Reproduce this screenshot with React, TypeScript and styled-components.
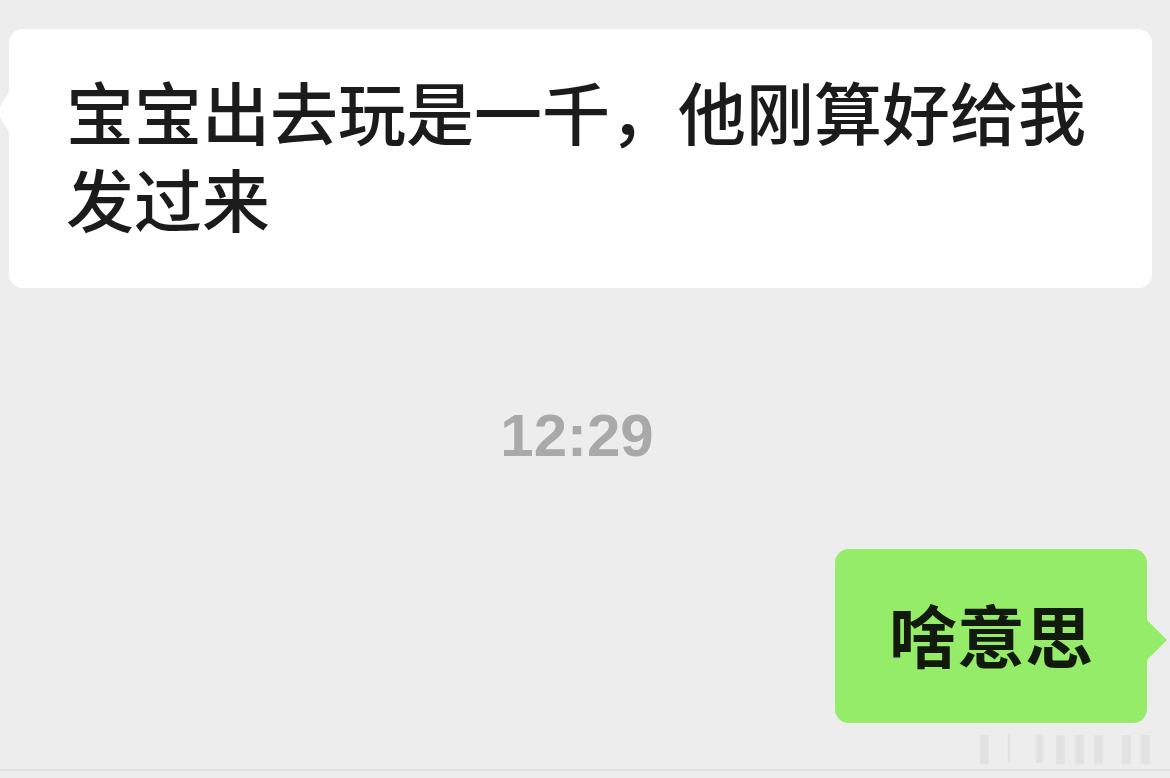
import React from 'react';
import styled, { createGlobalStyle } from 'styled-components';

const GlobalStyle = createGlobalStyle`
  html, body {
    margin: 0;
    padding: 0;
    background: #ededed;
  }
  body {
    font-family: "Noto Sans CJK SC", "Noto Sans", sans-serif;
  }
`;

const Screen = styled.div`
  width: 1170px;
  height: 778px;
  box-sizing: border-box;
  background: #ededed;
  display: flex;
  flex-direction: column;
  padding-top: 29px;
  overflow: hidden;
`;

const Row = styled.div<{ $self?: boolean }>`
  display: flex;
  justify-content: ${(p) => (p.$self ? 'flex-end' : 'flex-start')};
  padding: ${(p) => (p.$self ? '0 23px 0 0' : '0 0 0 9px')};
`;

const Bubble = styled.div<{ $self?: boolean }>`
  position: relative;
  box-sizing: border-box;
  background: ${(p) => (p.$self ? '#95ec69' : '#ffffff')};
  color: ${(p) => (p.$self ? '#111a0c' : '#1b1b1b')};
  border-radius: 14px;
  font-size: 68px;
  line-height: 87px;
  font-weight: ${(p) => (p.$self ? 700 : 500)};
  width: ${(p) => (p.$self ? '312px' : '1143px')};
  height: ${(p) => (p.$self ? '174px' : '259px')};
  padding: ${(p) => (p.$self ? '41px 0 0 54px' : '38px 40px 0 57px')};

  &::before {
    content: '';
    position: absolute;
    top: ${(p) => (p.$self ? '71px' : '63px')};
    ${(p) => (p.$self ? 'right: -20px;' : 'left: -12px;')}
    border-style: solid;
    border-width: 20px;
    border-color: transparent;
    ${(p) =>
      p.$self
        ? 'border-left: 20px solid #95ec69; border-right-width: 0;'
        : 'border-right: 12px solid #ffffff; border-left-width: 0;'}
  }
`;

const Time = styled.div`
  margin: 113px 0 78px;
  padding-right: 16px;
  text-align: center;
  font-family: "Liberation Sans", Arial, sans-serif;
  font-weight: 700;
  font-size: 60px;
  line-height: 70px;
  color: #a9a9a9;
`;

const Footer = styled.div`
  margin-top: 12px;
  display: flex;
  justify-content: flex-end;
  padding: 0 10px 6px 0;
  border-bottom: 2px solid #e1e1e1;
`;

const Mark = styled.div`
  font-family: "Liberation Sans", Arial, sans-serif;
  font-size: 24px;
  line-height: 28px;
  letter-spacing: 2px;
  color: #e2e2e2;
`;

export default function App() {
  return (
    <>
      <GlobalStyle />
      <Screen>
        <Row>
          <Bubble>宝宝出去玩是一千，他刚算好给我发过来</Bubble>
        </Row>
        <Time>12:29</Time>
        <Row $self>
          <Bubble $self>啥意思</Bubble>
        </Row>
        <Footer>
          <Mark>▌ ▏ ▍▌▌▌ ▌▌</Mark>
        </Footer>
      </Screen>
    </>
  );
}
